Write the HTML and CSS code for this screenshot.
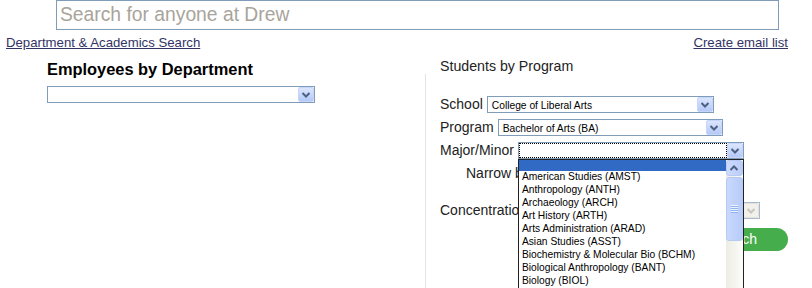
FILE: index.html
```html
<!DOCTYPE html>
<html>
<head>
<meta charset="utf-8">
<link rel="stylesheet" href="styles.css">
</head>
<body>
<div class="page">
  <div class="search-row"><input class="search" type="text" placeholder="Search for anyone at Drew"></div>
  <div class="links"><a href="#">Department &amp; Academics Search</a><a href="#">Create email list</a></div>
  <div class="columns">
    <section class="col-left">
      <h2 class="heading">Employees by Department</h2>
      <div class="xsel w-dept"><span class="xsel-val"></span><span class="xsel-btn"><svg width="10" height="6" viewBox="0 0 10 6"><path d="M1.5 1 L5 4.5 L8.5 1" fill="none" stroke="#4d6185" stroke-width="2"/></svg></span></div>
    </section>
    <section class="col-right">
      <h3 class="subheading">Students by Program</h3>
      <div class="panel">
        <div class="row"><label class="lbl">School</label><div class="xsel w-school"><span class="xsel-val">College of Liberal Arts</span><span class="xsel-btn"><svg width="10" height="6" viewBox="0 0 10 6"><path d="M1.5 1 L5 4.5 L8.5 1" fill="none" stroke="#4d6185" stroke-width="2"/></svg></span></div></div>
        <div class="row"><label class="lbl">Program</label><div class="xsel w-program"><span class="xsel-val">Bachelor of Arts (BA)</span><span class="xsel-btn"><svg width="10" height="6" viewBox="0 0 10 6"><path d="M1.5 1 L5 4.5 L8.5 1" fill="none" stroke="#4d6185" stroke-width="2"/></svg></span></div></div>
        <div class="row"><label class="lbl">Major/Minor</label><div class="xsel w-major"><span class="xsel-val focus"></span><span class="xsel-btn"><svg width="10" height="6" viewBox="0 0 10 6"><path d="M1.5 1 L5 4.5 L8.5 1" fill="none" stroke="#4d6185" stroke-width="2"/></svg></span>
          <div class="dd">
            <div class="dd-opts">
              <div class="opt sel"></div>
              <div class="opt">American Studies (AMST)</div>
              <div class="opt">Anthropology (ANTH)</div>
              <div class="opt">Archaeology (ARCH)</div>
              <div class="opt">Art History (ARTH)</div>
              <div class="opt">Arts Administration (ARAD)</div>
              <div class="opt">Asian Studies (ASST)</div>
              <div class="opt">Biochemistry &amp; Molecular Bio (BCHM)</div>
              <div class="opt">Biological Anthropology (BANT)</div>
              <div class="opt">Biology (BIOL)</div>
            </div>
            <div class="sb">
              <div class="sb-up"><svg width="10" height="6" viewBox="0 0 10 6"><path d="M1.5 5 L5 1.5 L8.5 5" fill="none" stroke="#4d6185" stroke-width="2"/></svg></div>
              <div class="sb-thumb"><span class="grip"></span></div>
            </div>
          </div>
        </div></div>
        <div class="row narrow"><label class="lbl">Narrow by</label></div>
        <div class="row"><label class="lbl">Concentration</label><div class="xsel disabled w-conc"><span class="xsel-val"></span><span class="xsel-btn"><svg width="10" height="6" viewBox="0 0 10 6"><path d="M1.5 1 L5 4.5 L8.5 1" fill="none" stroke="#c8c6bb" stroke-width="2"/></svg></span></div></div>
        <div class="actions"><button class="go" type="button">Search</button></div>
      </div>
    </section>
  </div>
</div>
</body>
</html>
```
FILE: styles.css
```css
html, body {
  margin: 0;
  height: 288px;
  overflow: hidden;
  background: #fff;
}
body {
  font-family: "Liberation Sans", Arial, sans-serif;
  color: #222;
}
.search-row {
  padding-left: 56px;
}
.search {
  display: block;
  box-sizing: border-box;
  width: 723px;
  height: 30px;
  margin: 0;
  padding: 0 3px;
  border: 1px solid #7f9db9;
  background: #fff;
  font: 19.3px "Liberation Sans", Arial, sans-serif;
  color: #333;
  outline: none;
}
.search::placeholder {
  color: #a8a49b;
  opacity: 1;
}
.links {
  display: flex;
  justify-content: space-between;
  margin-top: 5px;
  padding: 0 24px 0 6px;
  font-size: 13.2px;
  line-height: 15px;
}
.links a {
  color: #333366;
  text-decoration: underline;
}
.columns {
  display: flex;
  padding-right: 24px;
}
.col-left {
  width: 378px;
  padding-left: 47px;
}
.heading {
  margin: 10px 0 0;
  font-size: 16.4px;
  line-height: 18px;
  font-weight: bold;
  color: #000;
}
.w-dept {
  width: 268px;
  margin-top: 8px;
}
.col-right {
  flex: 1;
}
.subheading {
  margin: 9px 0 0 15px;
  font-size: 14.2px;
  line-height: 15px;
  font-weight: normal;
  color: #222;
}
.panel {
  box-sizing: border-box;
  height: 214px;
  border-left: 1px solid #e4e4e4;
  padding: 22px 0 0 14px;
  display: flex;
  flex-direction: column;
  gap: 6px;
}
.row {
  display: flex;
  align-items: center;
  gap: 4px;
  height: 17px;
  font-size: 14px;
  line-height: 17px;
}
.lbl {
  color: #222;
  white-space: nowrap;
}
.narrow {
  padding-left: 26px;
  margin-bottom: 14px;
}
.xsel {
  position: relative;
  box-sizing: border-box;
  height: 17px;
  border: 1px solid #7f9db9;
  background: #fff;
  display: flex;
}
.w-school { width: 227px; }
.w-program { width: 225px; }
.w-major { width: 226px; }
.w-conc { width: 229px; border-color: #a7bad2; }
.xsel-val {
  flex: 1;
  box-sizing: border-box;
  padding: 1px 0 0 4px;
  font-size: 10.25px;
  line-height: 15px;
  color: #000;
  white-space: nowrap;
  overflow: hidden;
}
.xsel-val.focus {
  border: 1px dotted #000;
}
.xsel-btn {
  box-sizing: border-box;
  width: 16px;
  height: 15px;
  border: 1px solid #c6d5fc;
  border-radius: 2px;
  background: linear-gradient(#dbe5fd, #b5c9f7);
  display: flex;
  align-items: center;
  justify-content: center;
}
.disabled .xsel-btn {
  background: #f1f0eb;
  border-color: #e3e2da;
}
.dd {
  position: absolute;
  left: -1px;
  top: 16px;
  z-index: 5;
  box-sizing: border-box;
  width: 226px;
  height: 129px;
  border: 1px solid #222;
  border-bottom: none;
  background: #fff;
  display: flex;
}
.dd-opts {
  flex: 1;
  overflow: hidden;
}
.opt {
  height: 13px;
  line-height: 12px;
  padding-left: 3px;
  font-size: 10.25px;
  color: #000;
  white-space: nowrap;
}
.opt.sel {
  height: 11px;
  background: #316ac5;
}
.sb {
  width: 17px;
  display: flex;
  flex-direction: column;
  gap: 1px;
  background: linear-gradient(to right, #edece4, #fcfcf9);
}
.sb-up, .sb-thumb {
  box-sizing: border-box;
  border: 1px solid #b7caf5;
  border-radius: 3px;
  background: linear-gradient(to right, #cddbfd, #bacdf8);
  display: flex;
  align-items: center;
  justify-content: center;
}
.sb-up {
  height: 16px;
}
.sb-thumb {
  height: 64px;
  background: linear-gradient(to right, #c9d8fd, #b8ccf8);
}
.grip {
  width: 7px;
  height: 8px;
  background: repeating-linear-gradient(#eef4fe 0 1px, #8fb1f6 1px 2px);
}
.actions {
  display: flex;
  justify-content: flex-end;
  margin-top: 3px;
}
.go {
  height: 23px;
  padding: 0 31px;
  border: none;
  border-radius: 12px;
  background: #45ad4b;
  color: #fff;
  font: 14px/23px "Liberation Sans", Arial, sans-serif;
}
```
